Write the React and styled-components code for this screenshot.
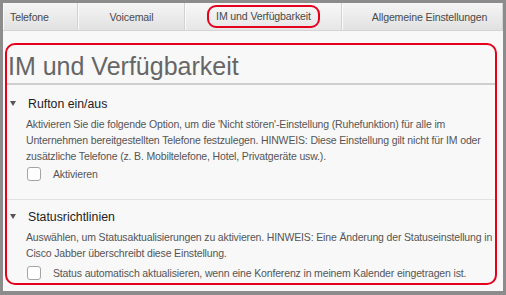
import React from "react";
import styled, { createGlobalStyle } from "styled-components";

const GlobalStyle = createGlobalStyle`
  html, body {
    margin: 0;
    padding: 0;
    background: #8c8c8c;
  }
  * {
    box-sizing: border-box;
  }
`;

const Frame = styled.div`
  width: 506px;
  height: 295px;
  border: 3px solid #8c8c8c;
  border-bottom-width: 4px;
  background: #f8f8f8;
  font-family: "Liberation Sans", Arial, sans-serif;
  overflow: hidden;
`;

const TabBar = styled.div`
  display: flex;
  height: 28px;
  border-bottom: 1px solid #d4d4d4;
`;

const Tab = styled.div`
  width: ${(p) => p.$width}px;
  display: flex;
  align-items: center;
  justify-content: ${(p) => (p.$left ? "flex-start" : "center")};
  padding-left: ${(p) => p.$pad || 0}px;
  font-size: 10.6px;
  letter-spacing: -0.15px;
  color: #4a4a4a;
  background: ${(p) =>
    p.$active
      ? "linear-gradient(#f8f8f8, #e6e6e6)"
      : "linear-gradient(#f5f5f5, #e1e1e1)"};
  border-left: 1px solid #fafafa;
  border-right: 1px solid #d2d2d2;
`;

const Marked = styled.span`
  border: 2.5px solid #e5001b;
  border-radius: 9px;
  padding: 3px 7px 4px;
`;

const Panel = styled.div`
  margin: 12px 6px 0 2px;
  height: 242px;
  border: 2.5px solid #e5001b;
  border-radius: 10px;
`;

const Heading = styled.h1`
  margin: 0;
  padding: 8px 0 4px 1px;
  font-size: 25px;
  font-weight: 400;
  color: #666;
  line-height: 26px;
  border-bottom: 2px solid #cfcfcf;
`;

const Section = styled.div`
  padding: ${(p) => p.$top}px 0 ${(p) => p.$bottom}px 2px;
  border-top: ${(p) => (p.$divided ? "1px solid #e2e2e2" : "none")};
`;

const SectionHead = styled.div`
  display: flex;
  align-items: center;
  gap: 12px;
  height: 15px;
  font-size: 12.3px;
  color: #222;
  margin-bottom: 5px;
`;

const Caret = styled.span`
  width: 0;
  height: 0;
  border-left: 3.5px solid transparent;
  border-right: 3.5px solid transparent;
  border-top: 5px solid #555;
  margin-left: 1px;
`;

const Text = styled.p`
  margin: 0 0 0 17px;
  font-size: 10.5px;
  letter-spacing: -0.15px;
  line-height: 16px;
  color: #555;
`;

const CheckRow = styled.label`
  display: flex;
  align-items: center;
  gap: 12px;
  margin: ${(p) => p.$top}px 0 0 18px;
  font-size: 10.5px;
  letter-spacing: -0.15px;
  color: #555;
`;

const Box = styled.span`
  flex: none;
  width: 14px;
  height: 14px;
  border: 1px solid #a4a4a4;
  border-radius: 3px;
  background: #fff;
`;

export default function App() {
  return (
    <>
      <GlobalStyle />
      <Frame>
        <TabBar>
          <Tab $width={75} $left $pad={6}>Telefone</Tab>
          <Tab $width={107}>Voicemail</Tab>
          <Tab $width={157} $active>
            <Marked>IM und Verfügbarkeit</Marked>
          </Tab>
          <Tab $width={161} $pad={14}>Allgemeine Einstellungen</Tab>
        </TabBar>
        <Panel>
          <Heading>IM und Verfügbarkeit</Heading>
          <Section $top={11} $bottom={18}>
            <SectionHead>
              <Caret />
              Rufton ein/aus
            </SectionHead>
            <Text>
              Aktivieren Sie die folgende Option, um die 'Nicht stören'-Einstellung
              (Ruhefunktion) für alle im Unternehmen bereitgestellten Telefone
              festzulegen. HINWEIS: Diese Einstellung gilt nicht für IM oder
              zusätzliche Telefone (z. B. Mobiltelefone, Hotel, Privatgeräte usw.).
            </Text>
            <CheckRow $top={3}>
              <Box />
              Aktivieren
            </CheckRow>
          </Section>
          <Section $divided $top={9} $bottom={0}>
            <SectionHead>
              <Caret />
              Statusrichtlinien
            </SectionHead>
            <Text>
              Auswählen, um Statusaktualisierungen zu aktivieren. HINWEIS: Eine
              Änderung der Statuseinstellung in Cisco Jabber überschreibt diese
              Einstellung.
            </Text>
            <CheckRow $top={5}>
              <Box />
              Status automatisch aktualisieren, wenn eine Konferenz in meinem
              Kalender eingetragen ist.
            </CheckRow>
          </Section>
        </Panel>
      </Frame>
    </>
  );
}
